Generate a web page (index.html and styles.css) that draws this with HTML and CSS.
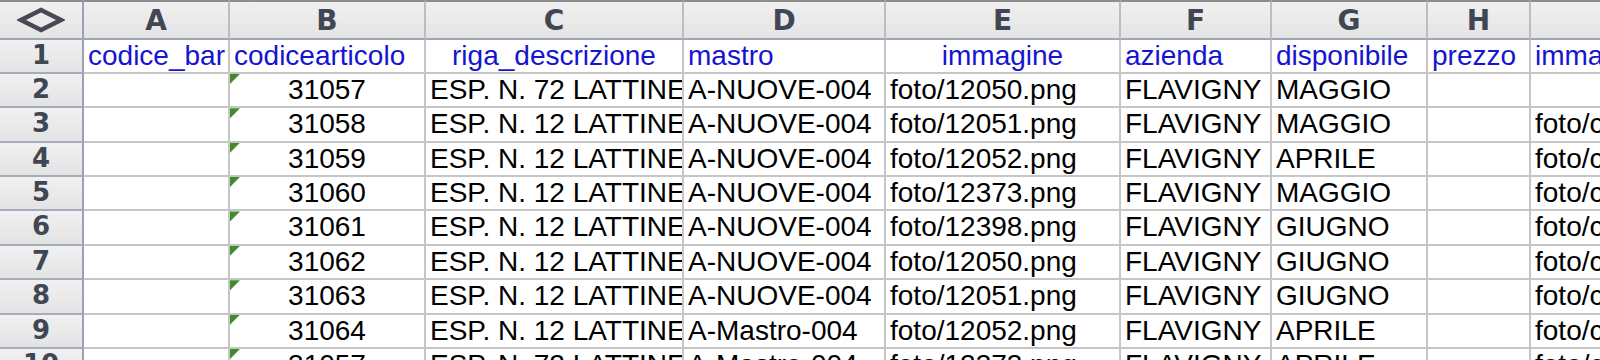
FILE: index.html
```html
<!DOCTYPE html>
<html>
<head>
<meta charset="utf-8">
<link rel="stylesheet" href="styles.css">
</head>
<body>
<div class="sheet">
  <div class="hd corner"><svg class="diamond" width="48" height="26" viewBox="0 0 48 26"><polygon points="4,13 24,3 44,13 24,23" fill="none" stroke="#474a52" stroke-width="4.5"/></svg></div>
  <div class="hd">A</div><div class="hd">B</div><div class="hd">C</div><div class="hd">D</div><div class="hd">E</div><div class="hd">F</div><div class="hd">G</div><div class="hd">H</div><div class="hd"></div>

  <div class="rn">1</div>
  <div class="c t">codice_bar</div><div class="c t">codicearticolo</div><div class="c t mid">riga_descrizione</div><div class="c t">mastro</div><div class="c t mid">immagine</div><div class="c t">azienda</div><div class="c t">disponibile</div><div class="c t">prezzo</div><div class="c t">immagine_grande</div>

  <div class="rn">2</div>
  <div class="c"></div><div class="c num">31057</div><div class="c">ESP. N. 72 LATTINE IN CARTONE</div><div class="c">A-NUOVE-004</div><div class="c">foto/12050.png</div><div class="c">FLAVIGNY</div><div class="c">MAGGIO</div><div class="c"></div><div class="c"></div>

  <div class="rn">3</div>
  <div class="c"></div><div class="c num">31058</div><div class="c">ESP. N. 12 LATTINE IN CARTONE</div><div class="c">A-NUOVE-004</div><div class="c">foto/12051.png</div><div class="c">FLAVIGNY</div><div class="c">MAGGIO</div><div class="c"></div><div class="c">foto/copertina.png</div>

  <div class="rn">4</div>
  <div class="c"></div><div class="c num">31059</div><div class="c">ESP. N. 12 LATTINE IN CARTONE</div><div class="c">A-NUOVE-004</div><div class="c">foto/12052.png</div><div class="c">FLAVIGNY</div><div class="c">APRILE</div><div class="c"></div><div class="c">foto/copertina.png</div>

  <div class="rn">5</div>
  <div class="c"></div><div class="c num">31060</div><div class="c">ESP. N. 12 LATTINE IN CARTONE</div><div class="c">A-NUOVE-004</div><div class="c">foto/12373.png</div><div class="c">FLAVIGNY</div><div class="c">MAGGIO</div><div class="c"></div><div class="c">foto/copertina.png</div>

  <div class="rn">6</div>
  <div class="c"></div><div class="c num">31061</div><div class="c">ESP. N. 12 LATTINE IN CARTONE</div><div class="c">A-NUOVE-004</div><div class="c">foto/12398.png</div><div class="c">FLAVIGNY</div><div class="c">GIUGNO</div><div class="c"></div><div class="c">foto/copertina.png</div>

  <div class="rn">7</div>
  <div class="c"></div><div class="c num">31062</div><div class="c">ESP. N. 12 LATTINE IN CARTONE</div><div class="c">A-NUOVE-004</div><div class="c">foto/12050.png</div><div class="c">FLAVIGNY</div><div class="c">GIUGNO</div><div class="c"></div><div class="c">foto/copertina.png</div>

  <div class="rn">8</div>
  <div class="c"></div><div class="c num">31063</div><div class="c">ESP. N. 12 LATTINE IN CARTONE</div><div class="c">A-NUOVE-004</div><div class="c">foto/12051.png</div><div class="c">FLAVIGNY</div><div class="c">GIUGNO</div><div class="c"></div><div class="c">foto/copertina.png</div>

  <div class="rn">9</div>
  <div class="c"></div><div class="c num">31064</div><div class="c">ESP. N. 12 LATTINE IN CARTONE</div><div class="c">A-Mastro-004</div><div class="c">foto/12052.png</div><div class="c">FLAVIGNY</div><div class="c">APRILE</div><div class="c"></div><div class="c">foto/copertina.png</div>

  <div class="rn">10</div>
  <div class="c"></div><div class="c num">31057</div><div class="c">ESP. N. 72 LATTINE IN CARTONE</div><div class="c">A-Mastro-004</div><div class="c">foto/12373.png</div><div class="c">FLAVIGNY</div><div class="c">APRILE</div><div class="c"></div><div class="c">foto/copertina.png</div>
</div>
</body>
</html>
```

FILE: styles.css
```css
html, body {
  margin: 0;
  padding: 0;
  background: #ffffff;
  overflow: hidden;
}

.sheet {
  display: grid;
  grid-template-columns: 84px 146px 196px 258px 202px 235px 151px 156px 103px 240px;
  grid-template-rows: 39.5px repeat(10, 34.4px);
  width: 1771px;
}

.hd {
  box-sizing: border-box;
  border-top: 2px solid #8e8e8e;
  border-bottom: 2px solid #9ea7b4;
  border-right: 2px solid #b9bdc4;
  background: linear-gradient(#f0f0f0, #e4e4e4);
  font-family: "DejaVu Sans", sans-serif;
  font-weight: bold;
  font-size: 28px;
  line-height: 33px;
  padding-top: 2px;
  color: #404653;
  text-align: center;
}

.corner {
  display: flex;
  align-items: center;
  justify-content: center;
  padding-top: 0;
  border-right-color: #98a2b1;
}

.diamond {
  display: block;
}

.rn {
  box-sizing: border-box;
  border-right: 2px solid #98a2b1;
  border-bottom: 2px solid #a4adba;
  background: linear-gradient(#f1f1f1, #e3e3e3);
  font-family: "DejaVu Sans", sans-serif;
  font-weight: bold;
  font-size: 26px;
  line-height: 31px;
  color: #404653;
  text-align: center;
}

.c {
  position: relative;
  box-sizing: border-box;
  border-right: 2px solid #c6c6c6;
  border-bottom: 2px solid #c6c6c6;
  font-family: "Liberation Sans", Arial, sans-serif;
  font-size: 28px;
  line-height: 31px;
  color: #000;
  padding: 0 0 0 4px;
  white-space: nowrap;
  overflow: hidden;
}

.c.t {
  color: #1414d2;
}

.c.mid {
  text-align: center;
  padding-left: 0;
}

.c.num {
  text-align: center;
  padding-left: 0;
}

.c.num::before {
  content: "";
  position: absolute;
  left: 0;
  top: 0;
  width: 10px;
  height: 10px;
  background: #428a2c;
  clip-path: polygon(0 0, 100% 0, 0 100%);
}
```
